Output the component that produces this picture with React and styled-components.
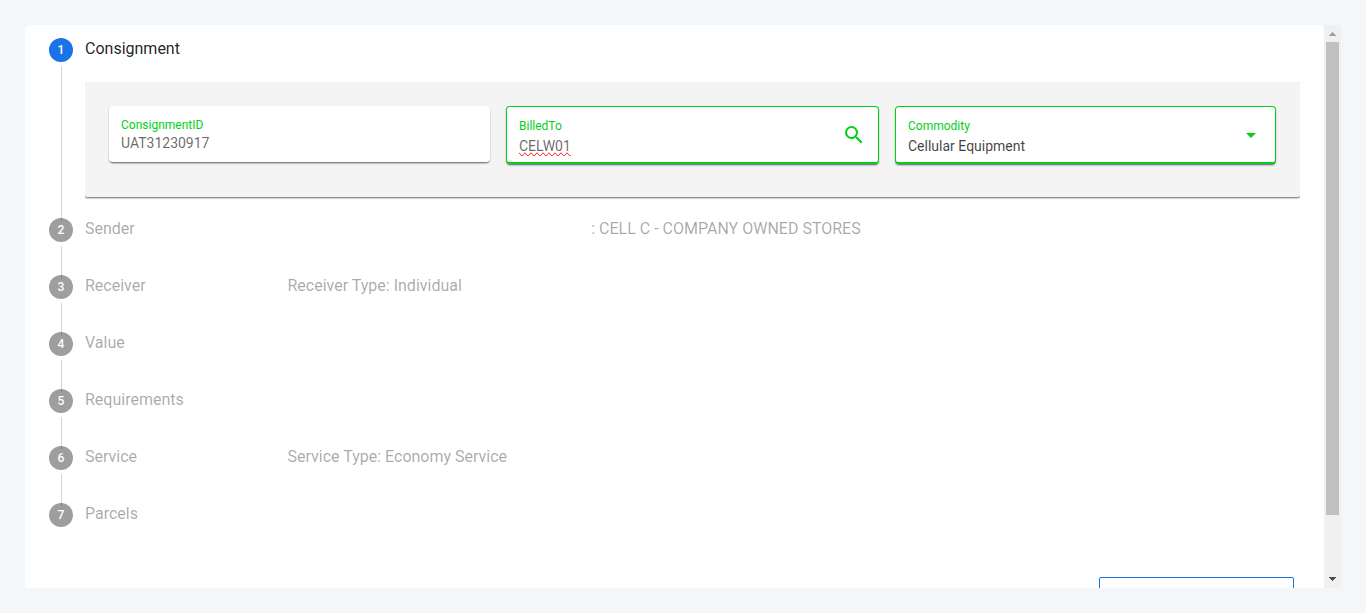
import React from 'react';
import styled, { createGlobalStyle, css } from 'styled-components';
import { MdSearch, MdArrowDropDown } from 'react-icons/md';

const GREEN = '#00d118';
const BLUE = '#1a73e8';

const GlobalStyle = createGlobalStyle`
  *, *::before, *::after { box-sizing: border-box; }
  body {
    margin: 0;
    background: #f3f7fa;
    font-family: Roboto, 'Liberation Sans', sans-serif;
    color: rgba(0, 0, 0, 0.87);
  }
`;

const Page = styled.div`
  height: 100vh;
  padding: 25px;
  display: flex;
`;

const Card = styled.main`
  flex: 1;
  min-width: 0;
  display: flex;
  flex-direction: column;
  overflow: hidden;
  padding: 13px 24px 0;
  background: #fff;
  border-radius: 5px 5px 0 0;
`;

const Steps = styled.ol`
  list-style: none;
  margin: 0;
  padding: 0;
  flex: none;
`;

const StepItem = styled.li`
  display: flex;
  gap: 12px;
  min-height: 57px;
`;

const Rail = styled.div`
  flex: none;
  width: 24px;
  display: flex;
  flex-direction: column;
`;

const Badge = styled.span`
  flex: none;
  height: 24px;
  border-radius: 50%;
  background: ${(p) => (p.$active ? BLUE : 'rgba(0, 0, 0, 0.38)')};
  color: #fff;
  font-size: 12px;
  font-weight: 500;
  line-height: 24px;
  text-align: center;
`;

const Connector = styled.span`
  flex: 1;
  width: 1px;
  margin: 4px 0 -3px 12px;
  background: #d4d4d4;
`;

const StepBody = styled.div`
  flex: 1;
  min-width: 0;
`;

const StepHeader = styled.div`
  display: grid;
  grid-template-columns: 2fr 3fr 7fr;
  font-size: 16px;
  line-height: 22px;
  color: ${(p) => (p.$active ? 'rgba(0, 0, 0, 0.87)' : 'rgba(0, 0, 0, 0.35)')};
`;

const StepTitle = styled.h2`
  margin: 0;
  font: inherit;
`;

const Summary = styled.span`
  grid-column: ${(p) => p.$column};
  white-space: nowrap;
`;

const Panel = styled.form`
  display: grid;
  grid-template-columns: 381fr 373fr 381fr;
  align-items: start;
  gap: 16px;
  margin: 22px 0 21px;
  padding: 24px 24px 33px;
  background: #f4f4f4;
  border-radius: 2px;
  box-shadow: 0 1px 2px rgba(0, 0, 0, 0.6);
  clip-path: inset(0 0 -4px 0);
`;

const Field = styled.div`
  min-width: 0;
  display: flex;
  align-items: center;
  justify-content: space-between;
  height: 56px;
  padding: 0 12px;
  background: #fff;
  border-radius: 4px;
  box-shadow: 0 2px 2px -1px rgba(0, 0, 0, 0.5), 0 1px 2px rgba(0, 0, 0, 0.2);
  ${(p) =>
    p.$outlined &&
    css`
      height: 58px;
      border: 1px solid ${GREEN};
      border-bottom-width: 2px;
    `}
`;

const FieldText = styled.div`
  flex: 1;
  min-width: 0;
  display: flex;
  flex-direction: column;
  gap: ${(p) => p.$gap}px;
  padding-top: ${(p) => p.$top}px;
`;

const FieldLabel = styled.label`
  font-size: 12px;
  line-height: 16px;
  color: ${GREEN};
`;

const control = css`
  width: 100%;
  height: 20px;
  margin: 0;
  padding: 0;
  border: 0;
  outline: 0;
  background: transparent;
  font: 14px/20px Roboto, 'Liberation Sans', sans-serif;
`;

const TextInput = styled.input`
  ${control}
  color: rgba(0, 0, 0, 0.6);
  text-decoration-line: ${(p) => (p.$misspelt ? 'spelling-error' : 'none')};
`;

const Select = styled.select`
  ${control}
  appearance: none;
  color: rgba(0, 0, 0, 0.75);
`;

const IconButton = styled.button`
  display: flex;
  padding: 0;
  border: 0;
  background: none;
  color: ${GREEN};
`;

const SelectArrow = styled(MdArrowDropDown)`
  flex: none;
  color: ${GREEN};
`;

const Actions = styled.div`
  flex: none;
  display: flex;
  justify-content: flex-end;
  padding: 17px 6px 0;
`;

const NextButton = styled.button`
  width: 195px;
  height: 36px;
  border: 1px solid ${BLUE};
  border-radius: 2px;
  background: #fff;
`;

const ScrollBar = styled.div`
  flex: none;
  width: 17px;
  display: flex;
  flex-direction: column;
  background: #f0f0f0;
`;

const ScrollArrow = styled.svg`
  flex: none;
  width: 17px;
  height: 17px;
  fill: ${(p) => (p.$dim ? '#a0a0a0' : '#4c4c4c')};
`;

const ScrollTrack = styled.div`
  flex: 1;
  padding: 0 2px;
`;

const ScrollThumb = styled.div`
  height: 89.5%;
  background: #c1c1c1;
`;

const laterSteps = [
  { title: 'Sender', summary: ': CELL C - COMPANY OWNED STORES', column: 3 },
  { title: 'Receiver', summary: 'Receiver Type: Individual', column: 2 },
  { title: 'Value' },
  { title: 'Requirements' },
  { title: 'Service', summary: 'Service Type: Economy Service', column: 2 },
  { title: 'Parcels' },
];

function Step({ number, title, summary, column, active, last, children }) {
  return (
    <StepItem aria-current={active ? 'step' : undefined}>
      <Rail>
        <Badge $active={active}>{number}</Badge>
        {!last && <Connector />}
      </Rail>
      <StepBody>
        <StepHeader $active={active}>
          <StepTitle>{title}</StepTitle>
          {summary && <Summary $column={column}>{summary}</Summary>}
        </StepHeader>
        {children}
      </StepBody>
    </StepItem>
  );
}

export default function App() {
  return (
    <>
      <GlobalStyle />
      <Page>
        <Card>
          <Steps>
            <Step number={1} title="Consignment" active>
              <Panel onSubmit={(e) => e.preventDefault()}>
                <Field>
                  <FieldText $gap={0} $top={2}>
                    <FieldLabel htmlFor="consignment-id">ConsignmentID</FieldLabel>
                    <TextInput id="consignment-id" defaultValue="UAT31230917" />
                  </FieldText>
                </Field>
                <Field $outlined>
                  <FieldText $gap={2} $top={4}>
                    <FieldLabel htmlFor="billed-to">BilledTo</FieldLabel>
                    <TextInput id="billed-to" defaultValue="CELW01" $misspelt />
                  </FieldText>
                  <IconButton type="button" aria-label="Search">
                    <MdSearch size={24} />
                  </IconButton>
                </Field>
                <Field $outlined>
                  <FieldText $gap={2} $top={4}>
                    <FieldLabel htmlFor="commodity">Commodity</FieldLabel>
                    <Select id="commodity" defaultValue="Cellular Equipment">
                      <option>Cellular Equipment</option>
                    </Select>
                  </FieldText>
                  <SelectArrow size={24} />
                </Field>
              </Panel>
            </Step>
            {laterSteps.map((step, i) => (
              <Step
                key={step.title}
                number={i + 2}
                last={i === laterSteps.length - 1}
                {...step}
              />
            ))}
          </Steps>
          <Actions>
            <NextButton type="button" aria-label="Next" />
          </Actions>
        </Card>
        <ScrollBar aria-hidden="true">
          <ScrollArrow viewBox="0 0 17 17" $dim>
            <path d="M8 7h1v1h1v1h1v1h1v1H5v-1h1V9h1V8h1z" />
          </ScrollArrow>
          <ScrollTrack>
            <ScrollThumb />
          </ScrollTrack>
          <ScrollArrow viewBox="0 0 17 17">
            <path d="M5 6h7v1h-1v1h-1v1H9v1H8V9H7V8H6V7H5z" />
          </ScrollArrow>
        </ScrollBar>
      </Page>
    </>
  );
}
